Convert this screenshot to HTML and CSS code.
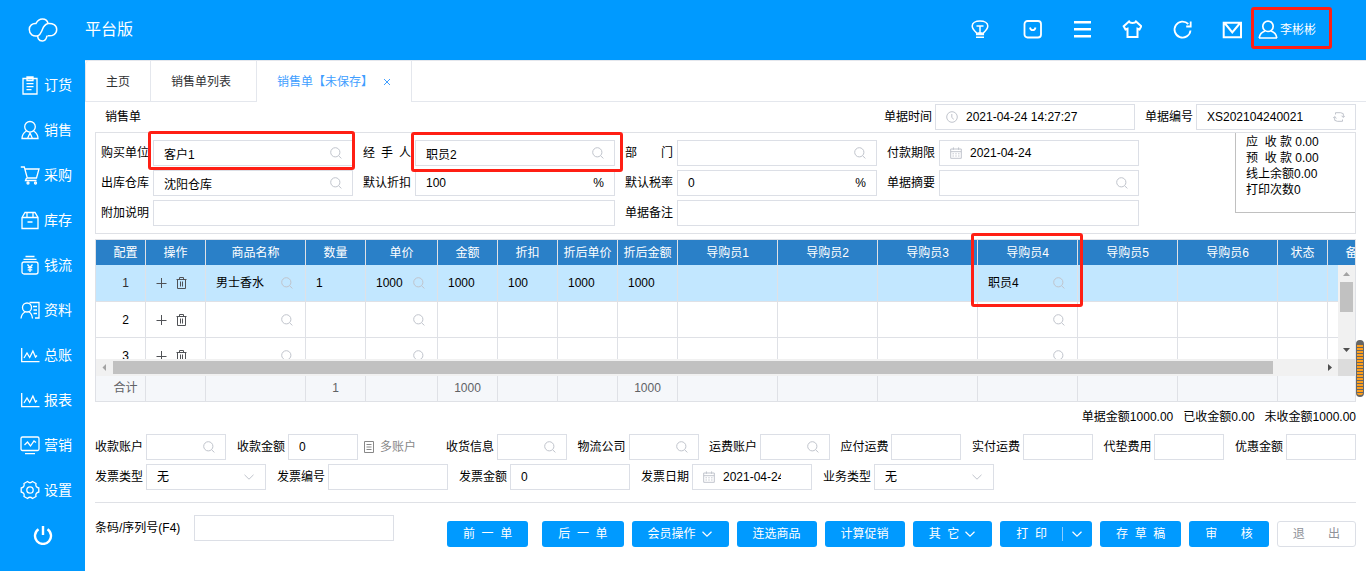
FILE: index.html
```html
<!DOCTYPE html>
<html lang="zh-CN">
<head>
<meta charset="utf-8">
<title>销售单</title>
<link rel="stylesheet" href="styles.css">
</head>
<body>
<svg class="defs" aria-hidden="true">
  <symbol id="search" viewBox="0 0 12 12"><circle cx="5.3" cy="5.3" r="4.6"/><path d="M8.6 8.8 11.4 11.4"/></symbol>
  <symbol id="calendar" viewBox="0 0 12 12"><path d="M.7 2h10.6v9.3H.7zM.7 4.7h10.6M3.4.4v2.4M8.6.4v2.4M2.5 6.8h1.4M5.3 6.8h1.4M8.1 6.8h1.4M2.5 9h1.4M5.3 9h1.4M8.1 9h1.4"/></symbol>
  <symbol id="down" viewBox="0 0 12 12"><path d="M1.5 3.8 6 8.2l4.500-4.400"/></symbol>
  <symbol id="plus" viewBox="0 0 12 12"><path d="M5.500 1v10M.5 6.500h10"/></symbol>
  <symbol id="trash" viewBox="0 0 12 12"><path d="M.5 2.500h10M3.500 2.500v-2h4v2M1.500 2.500v9h8v-9M4.500 4.500v5M6.500 4.500v5"/></symbol>
  <symbol id="chart" viewBox="0 0 20 20"><path d="M1.700 3v13.600H19.500M4 13l3-5 2.700 4.500 3.200-6.500 2.600 6 1.500-1.500"/></symbol>
</svg>

<header class="topbar">
  <svg class="logo" viewBox="0 0 30 26"><path d="M14.500 24C10 24 9.500 20 10 18.800 5 20 1.300 17 1.300 12.500 1.300 8.500 4.500 6 8 6.500 9.500 3.500 12 2 14.500 2c3.500 0 5 2 5.500 4.500 4.500-.5 8.700 1.500 8.700 6 0 4.500-4 6.800-9 6.200M20 6.500c-5 1.500-5 5-6.500 8-1 2.300-2 3.500-3.500 4.300M19 18.700c-.5 3-2 5.300-4.500 5.300"/></svg>
  <h1 class="edition">平台版</h1>
  <div class="tools">
    <button class="tool" aria-label="帮助"><svg viewBox="0 0 20 20"><path d="M6.700 13C4.500 11 2.200 9 2.200 6 2.200 3 5.500 1 10 1s7.800 2 7.800 5c0 3-2.300 5-4.500 7v1.500H6.700zM6 17.300h8M6.500 6h7M10 6v7M7.500 13h5"/></svg></button>
    <button class="tool" aria-label="应用"><svg class="medium" viewBox="0 0 20 20"><rect x="2.500" y="1" width="16.500" height="16.500" rx="3"/><path d="M8 7.500c.7 3.500 4.800 3.500 5.500 0"/></svg></button>
    <button class="tool" aria-label="菜单"><svg class="heavy" viewBox="0 0 20 20"><path d="M2 2.200h17M2 9.200h17M2 16.200h17"/></svg></button>
    <button class="tool" aria-label="主题"><svg class="bold" viewBox="0 0 20 20"><path d="M7 1.500 1.700 6.300 3.500 9.500l2-.8V17h10V8.700l2 .8 1.800-3.200L14 1.500c-1 2-6 2-7 0z"/></svg></button>
    <button class="tool" aria-label="刷新"><svg class="medium" viewBox="0 0 20 20"><path d="M18.500 10.500a8 8 0 1 1-2.200-6.500M18.700 1.500v5h-4.500"/></svg></button>
    <button class="tool" aria-label="消息"><svg class="bold" viewBox="0 0 20 20"><path d="M1.700 2.700h17.300v14.600H1.700zM3 3.500 10.300 12.500 17.700 3.500"/></svg></button>
    <button class="user"><svg viewBox="0 0 20 20"><circle cx="10" cy="6.300" r="5.200"/><path d="M1.200 18c.5-4 2.800-6 5.800-7M18.800 18c-.5-4-2.800-6-5.800-7M1 18h18"/></svg>李彬彬<span class="mark mark-user"></span></button>
  </div>
</header>

<div class="shell">
<nav class="side">
  <a class="side-item" href="#"><svg viewBox="0 0 20 20"><path d="M3 3.500h14v15.500H3zM7 2h6v3.500H7zM6.500 8.700h7M6.500 11.700h7M6.500 14.700h5"/></svg>订货</a>
  <a class="side-item" href="#"><svg viewBox="0 0 20 20"><circle cx="10" cy="6.800" r="5.300"/><path d="M6.500 11C3 13 2 15.500 2 18.500h16c0-3-1-5.500-4.500-7.500M7.500 18.500 10 13l2.500 5.500"/></svg>销售</a>
  <a class="side-item" href="#"><svg viewBox="0 0 20 20"><path d="M.8 2h3.500l3 11h9.200L19 4H5M6.500 13 5.500 15.500h11"/><circle cx="8" cy="18" r="1"/><circle cx="15.500" cy="18" r="1"/></svg>采购</a>
  <a class="side-item" href="#"><svg viewBox="0 0 20 20"><path d="M2 7.500 5 2.500h10l3 5v11H2zM2 7.500h16M7 7.500v-5M13 7.500v-5M7.500 12h5"/></svg>库存</a>
  <a class="side-item" href="#"><svg viewBox="0 0 20 20"><path d="M5.500 1.500h9M3.500 4.300h13M7.500 9.500l2.500 3 2.500-3M10 12.500v4.500M7.700 12.700h4.600M7.700 14.800h4.600"/><rect x="2" y="7" width="16" height="12" rx="2"/></svg>钱流</a>
  <a class="side-item" href="#"><svg viewBox="0 0 20 20"><circle cx="7" cy="7.500" r="4.500"/><path d="M1 18.500c.4-3.500 2-5.500 4-6.500M12.500 18.500c-.4-3.500-1.500-5.500-3.500-6.500M9.500 2.500h9.500v15.500h-4M13 6.500h4M13.500 10h3.500M13.500 13.500h3.500"/></svg>资料</a>
  <a class="side-item" href="#"><svg><use href="#chart"/></svg>总账</a>
  <a class="side-item" href="#"><svg><use href="#chart"/></svg>报表</a>
  <a class="side-item" href="#"><svg viewBox="0 0 20 20"><rect x="1" y="2" width="18" height="13.500" rx="1.500"/><path d="M4.500 10l3-3 3 4 3.500-5 2 1.500M5 18.700h10"/></svg>营销</a>
  <a class="side-item" href="#"><svg viewBox="0 0 20 20"><circle cx="10" cy="10" r="3.200"/><path d="M7.500 1.500Q10 4 12.500 1.500L16 3.500Q15 7 18.800 8v4Q15 13 16 16.500l-3.500 2Q10 16 7.500 18.500L4 16.500Q5 13 1.200 12V8Q5 7 4 3.500z"/></svg>设置</a>
  <button class="power" aria-label="退出登录"><svg viewBox="0 0 20 20"><path d="M5.500 4.300a8 8 0 1 0 9 0M10 1v9"/></svg></button>
</nav>

<main class="main">
  <div class="tabs">
    <a class="tab" href="#">主页</a>
    <a class="tab" href="#">销售单列表</a>
    <a class="tab active" href="#">销售单【未保存】<svg class="close" viewBox="0 0 8 8"><path d="M1 1l6 6M7 1 1 7"/></svg></a>
  </div>

  <div class="content">
    <div class="doc-row">
      <h2 class="doc-title">销售单</h2>
      <div class="field"><label for="time">单据时间</label><span class="box w200"><svg class="ic" viewBox="0 0 12 12"><circle cx="6" cy="6" r="5.300"/><path d="M5.800 3v3.500l2 1.800"/></svg><input id="time" value="2021-04-24 14:27:27"></span></div>
      <div class="field"><label for="no">单据编号</label><span class="box w160"><input id="no" value="XS202104240021"><svg class="ic" viewBox="0 0 12 12"><path d="M2.500 3.500V1.700h5.200l2.600 1v3.500M8.500 4.700l1.800 1.800L12 4.700M9.500 8.500v1.800H4.300l-2.600-1V5.800M0 7.300l1.700-1.800 1.800 1.800"/></svg></span></div>
    </div>

    <section class="form">
      <div class="fields">
        <div class="field"><label for="f1">购买单位</label><span class="box"><input id="f1" value="客户1"><svg class="ic"><use href="#search"/></svg></span><span class="mark mark-unit"></span></div>
        <div class="field"><label for="f2">经 手 人</label><span class="box"><input id="f2" value="职员2"><svg class="ic"><use href="#search"/></svg></span><span class="mark mark-staff"></span></div>
        <div class="field"><label for="f3">部 门</label><span class="box"><input id="f3"><svg class="ic"><use href="#search"/></svg></span></div>
        <div class="field"><label for="f4">付款期限</label><span class="box"><svg class="ic"><use href="#calendar"/></svg><input id="f4" value="2021-04-24"></span></div>
        <div class="field"><label for="f5">出库仓库</label><span class="box"><input id="f5" value="沈阳仓库"><svg class="ic"><use href="#search"/></svg></span></div>
        <div class="field"><label for="f6">默认折扣</label><span class="box"><input id="f6" value="100"><span>%</span></span></div>
        <div class="field"><label for="f7">默认税率</label><span class="box"><input id="f7" value="0"><span>%</span></span></div>
        <div class="field"><label for="f8">单据摘要</label><span class="box"><input id="f8"><svg class="ic"><use href="#search"/></svg></span></div>
        <div class="field wide"><label for="f9">附加说明</label><span class="box"><input id="f9"></span></div>
        <div class="field wide"><label for="f10">单据备注</label><span class="box"><input id="f10"></span></div>
      </div>
      <aside class="balance">
        <div>应&nbsp;&nbsp;收&nbsp;款&nbsp;0.00</div>
        <div>预&nbsp;&nbsp;收&nbsp;款&nbsp;0.00</div>
        <div>线上余额0.00</div>
        <div>打印次数0</div>
      </aside>
    </section>

    <section class="grid">
      <div class="clip">
      <table class="head">
        <colgroup><col class="c50"><col class="c60"><col class="c100"><col class="c60"><col class="c72"><col class="c60" span="4"><col class="c100" span="6"><col class="c50"><col class="c60"></colgroup>
        <thead><tr><th class="idx">配置</th><th>操作</th><th>商品名称</th><th>数量</th><th>单价</th><th>金额</th><th>折扣</th><th>折后单价</th><th>折后金额</th><th>导购员1</th><th>导购员2</th><th>导购员3</th><th class="anchor">导购员4<span class="mark mark-cell"></span></th><th>导购员5</th><th>导购员6</th><th>状态</th><th>备注</th></tr></thead>
      </table>
      </div>
      <div class="scroll">
        <div class="rows">
          <table class="body">
            <colgroup><col class="c50"><col class="c60"><col class="c100"><col class="c60"><col class="c72"><col class="c60" span="4"><col class="c100" span="6"><col class="c50"><col class="c60"></colgroup>
            <tbody>
            <tr class="current"><td class="idx">1</td><td><div class="ops"><button aria-label="添加"><svg><use href="#plus"/></svg></button><button aria-label="删除"><svg><use href="#trash"/></svg></button></div></td><td><div class="cell">男士香水<svg class="ic"><use href="#search"/></svg></div></td><td><div class="cell">1</div></td><td><div class="cell">1000<svg class="ic"><use href="#search"/></svg></div></td><td><div class="cell">1000</div></td><td><div class="cell">100</div></td><td><div class="cell">1000</div></td><td><div class="cell">1000</div></td><td></td><td></td><td></td><td><div class="cell">职员4<svg class="ic"><use href="#search"/></svg></div></td><td></td><td></td><td></td><td></td></tr>
            <tr><td class="idx">2</td><td><div class="ops"><button aria-label="添加"><svg><use href="#plus"/></svg></button><button aria-label="删除"><svg><use href="#trash"/></svg></button></div></td><td><div class="cell"><svg class="ic"><use href="#search"/></svg></div></td><td></td><td><div class="cell"><svg class="ic"><use href="#search"/></svg></div></td><td></td><td></td><td></td><td></td><td></td><td></td><td></td><td><div class="cell"><svg class="ic"><use href="#search"/></svg></div></td><td></td><td></td><td></td><td></td></tr>
            <tr><td class="idx">3</td><td><div class="ops"><button aria-label="添加"><svg><use href="#plus"/></svg></button><button aria-label="删除"><svg><use href="#trash"/></svg></button></div></td><td><div class="cell"><svg class="ic"><use href="#search"/></svg></div></td><td></td><td><div class="cell"><svg class="ic"><use href="#search"/></svg></div></td><td></td><td></td><td></td><td></td><td></td><td></td><td></td><td><div class="cell"><svg class="ic"><use href="#search"/></svg></div></td><td></td><td></td><td></td><td></td></tr>
            </tbody>
          </table>
        </div>
        <div class="vbar"><svg viewBox="0 0 17 17"><path class="off" d="M5 11h7L8.500 7z"/></svg><i></i><svg viewBox="0 0 17 17"><path d="M5 6h7l-3.500 4z"/></svg></div>
        <div class="hbar"><svg viewBox="0 0 17 17"><path class="off" d="M10 5v7L6.500 8.500z"/></svg><div class="track"><i></i></div><svg viewBox="0 0 17 17"><path d="M7 5v7l4-3.500z"/></svg></div>
        <div class="corner"></div>
      </div>
      <div class="clip">
      <table class="foot">
        <colgroup><col class="c50"><col class="c60"><col class="c100"><col class="c60"><col class="c72"><col class="c60" span="4"><col class="c100" span="6"><col class="c50"><col class="c60"></colgroup>
        <tbody><tr><td class="idx">合计</td><td></td><td></td><td>1</td><td></td><td>1000</td><td></td><td></td><td>1000</td><td></td><td></td><td></td><td></td><td></td><td></td><td class="last"></td><td></td></tr></tbody>
      </table>
      </div>
    </section>

    <div class="totals"><span>单据金额1000.00</span><span>已收金额0.00</span><span>未收金额1000.00</span></div>

    <div class="pay">
      <div class="field"><label for="p1">收款账户</label><span class="box w80"><input id="p1"><svg class="ic"><use href="#search"/></svg></span></div>
      <div class="field"><label for="p2">收款金额</label><span class="box w70"><input id="p2" value="0"></span></div>
      <button class="multi"><svg viewBox="0 0 10 12"><path d="M.5.5h9v11h-9zM2.500 3.500h5M2.500 6h5M2.500 8.500h5"/></svg>多账户</button>
      <div class="pay-rest">
        <div class="field"><label for="p3">收货信息</label><span class="box w70"><input id="p3"><svg class="ic"><use href="#search"/></svg></span></div>
        <div class="field"><label for="p4">物流公司</label><span class="box w70"><input id="p4"><svg class="ic"><use href="#search"/></svg></span></div>
        <div class="field"><label for="p5">运费账户</label><span class="box w70"><input id="p5"><svg class="ic"><use href="#search"/></svg></span></div>
        <div class="field"><label for="p6">应付运费</label><span class="box w70"><input id="p6"></span></div>
        <div class="field"><label for="p7">实付运费</label><span class="box w70"><input id="p7"></span></div>
        <div class="field"><label for="p8">代垫费用</label><span class="box w70"><input id="p8"></span></div>
        <div class="field"><label for="p9">优惠金额</label><span class="box w70"><input id="p9"></span></div>
      </div>
    </div>
    <div class="invoice">
      <div class="field"><label for="i1">发票类型</label><span class="box w120"><select id="i1"><option>无</option></select><svg class="ic"><use href="#down"/></svg></span></div>
      <div class="field"><label for="i2">发票编号</label><span class="box w120"><input id="i2"></span></div>
      <div class="field"><label for="i3">发票金额</label><span class="box w120"><input id="i3" value="0"></span></div>
      <div class="field"><label for="i4">发票日期</label><span class="box w120 date"><svg class="ic"><use href="#calendar"/></svg><input id="i4" value="2021-04-24"></span></div>
      <div class="field"><label for="i5">业务类型</label><span class="box w120"><select id="i5"><option>无</option></select><svg class="ic"><use href="#down"/></svg></span></div>
    </div>

    <footer class="actions">
      <div class="field barcode"><label for="code">条码/序列号(F4)</label><span class="box w200"><input id="code"></span></div>
      <div class="buttons">
        <button class="btn first">前&nbsp;&nbsp;一&nbsp;&nbsp;单</button>
        <button class="btn">后&nbsp;&nbsp;一&nbsp;&nbsp;单</button>
        <button class="btn">会员操作<svg class="caret"><use href="#down"/></svg></button>
        <button class="btn">连选商品</button>
        <button class="btn">计算促销</button>
        <button class="btn">其&nbsp;&nbsp;它<svg class="caret"><use href="#down"/></svg></button>
        <button class="btn split">打&nbsp;&nbsp;印<span class="bar"></span><svg class="caret"><use href="#down"/></svg></button>
        <button class="btn">存&nbsp;&nbsp;草&nbsp;&nbsp;稿</button>
        <button class="btn">审&nbsp;&nbsp;&nbsp;&nbsp;&nbsp;&nbsp;&nbsp;核</button>
        <button class="btn plain">退&nbsp;&nbsp;&nbsp;&nbsp;&nbsp;&nbsp;&nbsp;出</button>
      </div>
    </footer>
  </div>
  <div class="handle"></div>
</main>
</div>
</body>
</html>
```

FILE: styles.css
```css
* { box-sizing: border-box; }
body {
  margin: 0;
  min-height: 100vh;
  display: flex;
  flex-direction: column;
  font: 12px/16px "Liberation Sans", "Noto Sans CJK SC", sans-serif;
  color: #000;
  background: #fff;
}
button, input, select { font: inherit; color: inherit; margin: 0; padding: 0; border: 0; background: none; }
h1, h2 { margin: 0; font-weight: normal; }
a { color: inherit; text-decoration: none; }
svg { fill: none; stroke: currentColor; flex: none; }
.defs { position: absolute; width: 0; height: 0; }

.topbar { height: 60px; display: flex; align-items: center; background: #009aff; color: #fff; padding: 0 50px 0 28px; }
.logo { width: 30px; height: 26px; stroke-width: 1.5; }
.edition { font-size: 16px; line-height: 24px; margin-left: 27px; }
.tools { display: flex; align-items: center; gap: 30px; margin-left: auto; }
.tool { display: flex; }
.tool svg, .user svg { width: 20px; height: 20px; stroke-width: 1.5; }
.tool .medium { stroke-width: 1.8; }
.tool .bold { stroke-width: 2; }
.tool .heavy { stroke-width: 2.4; }
.tool:first-child { margin-right: 2px; }
.user { position: relative; display: flex; align-items: center; gap: 2px; margin-left: -14px; }
.user svg { stroke-width: 1.7; }

.mark { position: absolute; z-index: 2; border: 3px solid #ff1f14; border-radius: 3px; pointer-events: none; }
.mark-user { inset: -13px -16px -9px -7px; }
.mark-unit { inset: -9px -2px -4px 47px; }
.mark-staff { inset: -8px -8px -6px 48px; }
.mark-cell { width: 112px; height: 74px; left: -7px; top: -7px; }

.shell { flex: 1; display: flex; }
.side { width: 85px; flex: none; background: #009aff; color: #fff; padding-top: 2px; display: flex; flex-direction: column; }
.side-item { height: 45px; display: flex; align-items: center; gap: 4px; padding-left: 20px; font-size: 14px; line-height: 20px; }
.side-item svg { width: 20px; height: 20px; stroke-width: 1.3; }
.power { height: 45px; display: flex; align-items: center; justify-content: center; }
.power svg { width: 20px; height: 20px; stroke-width: 2.4; }

.main { position: relative; flex: 1; min-width: 0; }
.tabs { display: flex; height: 42px; border-top: 1px solid #e4e7ed; border-bottom: 1px solid #e4e7ed; }
.tab { display: flex; align-items: center; padding: 1px 20px 0; border-right: 1px solid #e4e7ed; color: #303133; }
.tab:first-child { border-left: 1px solid #e4e7ed; border-top-left-radius: 4px; }
.tab:nth-child(2) { padding-right: 25px; }
.tab.active { color: #409eff; background: #fff; margin-bottom: -1px; }
.close { width: 8px; height: 8px; margin-left: 10px; }

.content { padding: 2px 10px 24px; }
.field { position: relative; display: flex; align-items: center; gap: 3px; }
.field label { width: 48px; flex: none; white-space: nowrap; text-align-last: justify; }
.box { flex: 1; min-width: 0; height: 26px; display: flex; align-items: center; gap: 8px; padding: 0 10px; border: 1px solid #dcdfe6; background: #fff; }
.box input, .box select { flex: 1; width: 0; min-width: 0; height: 24px; outline: 0; appearance: none; }
.ic { width: 12px; height: 12px; color: #c0c4cc; stroke-width: 1; }
.w200 { flex: none; width: 200px; }
.w160 { flex: none; width: 160px; }
.w120 { flex: none; width: 120px; }
.w80 { flex: none; width: 80px; }
.w70 { flex: none; width: 70px; }
.date { padding-right: 30px; }

.doc-row { display: flex; gap: 10px; align-items: center; margin-bottom: 2px; }
.doc-title { font-size: 12px; line-height: 16px; margin-left: 10px; margin-right: auto; }

.form { display: flex; justify-content: space-between; align-items: flex-start; border: 1px solid #dfe1e6; }
.fields { display: grid; grid-template-columns: repeat(4, 252px); gap: 4px 10px; padding: 7px 0 7px 5px; }
.fields .field { gap: 4px; }
.wide { grid-column: span 2; }
.wide:last-child { grid-column: 3 / span 2; }
.balance { width: 120px; height: 80px; padding-left: 10px; border-left: 1px solid #c0c0c0; border-bottom: 1px solid #c0c0c0; padding-top: 1px; }

.grid { margin-top: 5px; border: 1px solid #dfe1e6; }
.clip { display: flex; min-width: 0; overflow-x: clip; }
table { table-layout: fixed; border-collapse: separate; border-spacing: 0; width: 1292px; flex: none; }
.c50 { width: 50px; }
.c60 { width: 60px; }
.c72 { width: 72px; }
.c100 { width: 100px; }
th, td { padding: 0; font-weight: normal; text-align: center; border-right: 1px solid #dfe1e6; white-space: nowrap; }
.head th { height: 25px; background: #2a80c8; color: #fff; }
.idx { padding-left: 10px; }
.anchor { position: relative; }
.scroll { display: grid; grid-template-columns: minmax(0, 1fr) 17px; grid-template-rows: 94px 17px; }
.rows { overflow: hidden; }
.body td { height: 36px; border-bottom: 1px solid #dfe1e6; }
.body .current td { height: 37px; background: #c2e7ff; }
.current .idx { color: #303133; }
.cell { display: flex; align-items: center; padding: 0 12px 0 10px; }
.cell .ic { margin-left: auto; }
.ops { display: flex; gap: 8px; padding-left: 10px; color: #505256; }
.ops button { display: flex; }
.ops svg { width: 12px; height: 12px; stroke-width: 1; }
.vbar, .hbar { display: flex; background: #f1f1f1; }
.vbar { flex-direction: column; justify-content: space-between; align-items: center; }
.vbar i { width: 13px; height: 30px; margin-bottom: 30px; background: #c1c1c1; }
.vbar svg, .hbar svg { width: 17px; height: 17px; fill: #505050; stroke: none; }
.vbar .off, .hbar .off { fill: #a3a3a3; }
.hbar { align-items: center; }
.track { flex: 1; }
.track i { display: block; width: 96%; height: 13px; background: #c1c1c1; }
.corner { background: #dcdcdc; }
.foot td { height: 25px; padding-bottom: 2px; background: #f5f7fa; color: #606266; }
.foot .last { border-right-color: #f5f7fa; }

.totals { display: flex; justify-content: flex-end; gap: 10px; padding: 7px 0 9px; }
.pay { display: flex; margin-bottom: 4px; }
.pay .field + .field { margin-left: 11px; }
.multi { display: flex; align-items: center; gap: 6px; margin-left: 6px; color: #888; }
.multi svg { width: 10px; height: 12px; }
.pay-rest { flex: 1; display: flex; justify-content: space-between; margin-left: 30px; }
.pay .pay-rest .field { margin-left: 0; }
.invoice { display: flex; gap: 11px; padding-bottom: 12px; border-bottom: 1px solid #dfe1e6; }

.actions { display: flex; justify-content: space-between; align-items: flex-start; padding-top: 12px; }
.barcode { gap: 14px; }
.barcode label { width: auto; }
.buttons { display: flex; gap: 8px; margin-top: 6px; }
.btn { height: 26px; padding: 0 16px; display: flex; align-items: center; border-radius: 3px; background: #009aff; color: #fff; white-space: nowrap; }
.first { margin-right: 6px; }
.caret { width: 12px; height: 12px; margin-left: 5px; stroke-width: 1.2; }
.split { padding-right: 9px; }
.bar { width: 1px; height: 14px; margin-left: 15px; background: #8cccff; }
.split .caret { margin-left: 8px; }
.plain { background: #fff; color: #909399; border: 1px solid #dcdfe6; padding: 0 15px; }

.handle { position: absolute; right: 2px; top: 280px; width: 8px; height: 57px; border-radius: 4px; border: 1px solid #666; border-width: 5px 1px 2px; background: repeating-linear-gradient(#ff9f1c 0 2px, #666 2px 3px); }
```
